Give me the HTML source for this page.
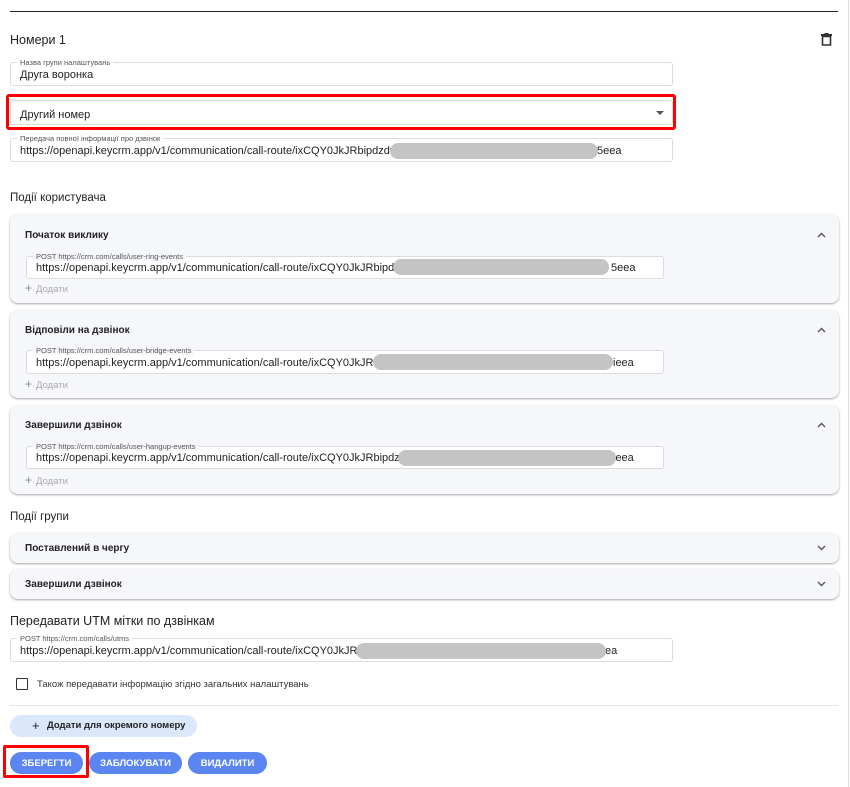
<!DOCTYPE html>
<html><head><meta charset="utf-8"><style>
*{box-sizing:border-box;margin:0;padding:0}
body{width:850px;height:787px;background:#fff;font-family:"Liberation Sans",Arial,sans-serif;color:#212121;position:relative;overflow:hidden}
.a{position:absolute}
.vl{left:848px;top:0;width:1px;height:787px;background:#e0e0e0}
.h{font-size:12.5px;color:#222}
.f{position:absolute;border:1px solid #dcdcdc;border-radius:3px;background:#fff}
.f .lb{position:absolute;top:-5px;left:6px;background:#fff;padding:0 3px;font-size:7.5px;color:#555;line-height:9px}
.f .v{position:absolute;left:9px;font-size:11px;color:#222;white-space:nowrap}
.blur{position:absolute;background:#c4c4c4;border-radius:9px;height:16px}
.p{position:absolute;left:10px;width:829px;background:#f6f7fb;border-radius:8px;box-shadow:0 1px 2px rgba(0,0,0,.35)}
.p .t{position:absolute;left:15px;font-size:10px;font-weight:bold;color:#222}
.p svg{position:absolute;right:13px}
.add{position:absolute;left:15px;font-size:9.5px;color:#aaa}
.add b{font-weight:normal;color:#888;font-size:12px;margin-right:4px}
.btn{position:absolute;top:752px;height:22px;border-radius:11px;background:#5b86f2;color:#fff;font-size:9.5px;font-weight:bold;text-align:center;line-height:23px}
</style></head><body>
<div class="a vl"></div>
<div class="a" style="left:10px;top:11px;width:828px;height:1px;background:#222"></div>
<div class="a h" style="left:10px;top:33px">Номери 1</div>
<svg class="a" style="left:821px;top:33px" width="11" height="13" viewBox="0 0 11 13"><rect x="0" y="1" width="11" height="2" fill="#333"/><rect x="3.5" y="0" width="4" height="2" fill="#333"/><path d="M1.5 3.5h8v8.5h-8z" fill="none" stroke="#333" stroke-width="1.6"/></svg>

<div class="f" style="left:10px;top:62px;width:663px;height:24px"><span class="lb">Назва групи налаштувань</span><span class="v" style="top:6px">Друга воронка</span></div>

<div class="a" style="left:6px;top:94px;width:670px;height:36px;border:3px solid #f00;border-radius:3px"></div>
<div class="f" style="left:10px;top:100px;width:663px;height:25px"><span class="v" style="top:8px">Другий номер</span>
<svg class="a" style="right:8px;top:10px" width="8" height="5"><path d="M0 0h8L4 4z" fill="#555"/></svg></div>

<div class="f" style="left:10px;top:138px;width:663px;height:24px"><span class="lb">Передача повної інформації про дзвінок</span><span class="v" style="top:6px">https://openapi.keycrm.app/v1/communication/call-route/ixCQY0JkJRbipdzdw</span><span class="v" style="top:6px;left:586px">5eea</span></div>
<div class="blur" style="left:390px;top:143px;width:208px"></div>

<div class="a h" style="left:10px;top:192px;font-size:11.5px">Події користувача</div>

<div class="p" style="top:214px;height:89px"><span class="t" style="top:16px">Початок виклику</span><svg style="top:18px" width="9" height="6"><path d="M1 5L4.5 1.5 8 5" fill="none" stroke="#555" stroke-width="1.4"/></svg>
<span class="add" style="top:67px"><b>+</b>Додати</span></div>
<div class="f" style="left:26px;top:256px;width:638px;height:23px"><span class="lb" style="background:#f6f7fb">POST https://crm.com/calls/user-ring-events</span><span class="v" style="top:5px">https://openapi.keycrm.app/v1/communication/call-route/ixCQY0JkJRbipdz</span><span class="v" style="top:5px;left:584px">5eea</span></div>
<div class="blur" style="left:393px;top:259px;width:216px"></div>

<div class="p" style="top:310px;height:88px"><span class="t" style="top:15px">Відповіли на дзвінок</span><svg style="top:17px" width="9" height="6"><path d="M1 5L4.5 1.5 8 5" fill="none" stroke="#555" stroke-width="1.4"/></svg>
<span class="add" style="top:67px"><b>+</b>Додати</span></div>
<div class="f" style="left:26px;top:350px;width:638px;height:24px"><span class="lb" style="background:#f6f7fb">POST https://crm.com/calls/user-bridge-events</span><span class="v" style="top:6px">https://openapi.keycrm.app/v1/communication/call-route/ixCQY0JkJRl</span><span class="v" style="top:6px;left:586px">ieea</span></div>
<div class="blur" style="left:373px;top:354px;width:240px"></div>

<div class="p" style="top:405px;height:89px"><span class="t" style="top:15px">Завершили дзвінок</span><svg style="top:17px" width="9" height="6"><path d="M1 5L4.5 1.5 8 5" fill="none" stroke="#555" stroke-width="1.4"/></svg>
<span class="add" style="top:68px"><b>+</b>Додати</span></div>
<div class="f" style="left:26px;top:446px;width:638px;height:23px"><span class="lb" style="background:#f6f7fb">POST https://crm.com/calls/user-hangup-events</span><span class="v" style="top:5px">https://openapi.keycrm.app/v1/communication/call-route/ixCQY0JkJRbipdz</span><span class="v" style="top:5px;left:586px">ieea</span></div>
<div class="blur" style="left:398px;top:450px;width:218px"></div>

<div class="a h" style="left:10px;top:511px;font-size:11.5px">Події групи</div>
<div class="p" style="top:533px;height:30px"><span class="t" style="top:10px">Поставлений в чергу</span><svg style="top:12px" width="9" height="6"><path d="M1 1L4.5 4.5 8 1" fill="none" stroke="#555" stroke-width="1.4"/></svg></div>
<div class="p" style="top:569px;height:30px"><span class="t" style="top:10px">Завершили дзвінок</span><svg style="top:12px" width="9" height="6"><path d="M1 1L4.5 4.5 8 1" fill="none" stroke="#555" stroke-width="1.4"/></svg></div>

<div class="a h" style="left:10px;top:614px">Передавати UTM мітки по дзвінкам</div>
<div class="f" style="left:10px;top:638px;width:663px;height:24px"><span class="lb">POST https://crm.com/calls/utms</span><span class="v" style="top:6px">https://openapi.keycrm.app/v1/communication/call-route/ixCQY0JkJRl</span><span class="v" style="top:6px;left:594px">ea</span></div>
<div class="blur" style="left:356px;top:643px;width:250px"></div>

<div class="a" style="left:16px;top:678px;width:12px;height:12px;border:1.5px solid #333;border-radius:1px"></div>
<div class="a" style="left:37px;top:679px;font-size:9.5px;color:#333">Також передавати інформацію згідно загальних налаштувань</div>
<div class="a" style="left:10px;top:705px;width:828px;height:1px;background:#e4e4e4"></div>

<div class="a" style="left:10px;top:715px;width:187px;height:22px;border-radius:11px;background:#dbe8fb;font-size:9.5px;font-weight:bold;line-height:22px;color:#222"><span style="position:absolute;left:22px;font-size:13px;font-weight:normal">+</span><span style="position:absolute;left:37px">Додати для окремого номеру</span></div>

<div class="a" style="left:3px;top:745px;width:86px;height:33px;border:3px solid #f00;border-radius:2px"></div>
<div class="btn" style="left:10px;width:73px">ЗБЕРЕГТИ</div>
<div class="btn" style="left:89px;width:93px">ЗАБЛОКУВАТИ</div>
<div class="btn" style="left:188px;width:79px">ВИДАЛИТИ</div>
</body></html>
